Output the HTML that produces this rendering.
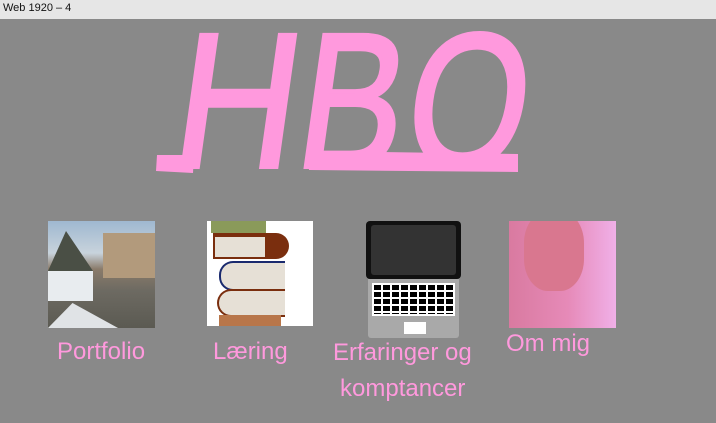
<!DOCTYPE html>
<html><head><meta charset="utf-8"><style>
body{margin:0;width:716px;height:423px;overflow:hidden;background:#898989;font-family:"Liberation Sans",sans-serif;position:relative}
.top{position:absolute;left:0;top:0;width:716px;height:19px;background:#e6e6e6;font-size:11px;line-height:17px;color:#111;padding-left:3px;box-sizing:border-box}
.lbl{position:absolute;color:#ff99dd;font-size:24px;white-space:nowrap}
.im{position:absolute;overflow:hidden}
</style></head><body>
<div class="top">Web 1920 – 4</div>
<svg width="716" height="423" style="position:absolute;left:0;top:0">
<g fill="#ff99dd" stroke="#ff99dd" stroke-width="4" font-family="Liberation Sans" font-size="192">
<text x="168" y="167" transform="skewX(-8) translate(24,0)" textLength="122" lengthAdjust="spacingAndGlyphs">H</text>
<text x="292" y="167" transform="skewX(-8) translate(24,0)" textLength="104" lengthAdjust="spacingAndGlyphs">B</text>
<text x="400" y="167" transform="skewX(-8) translate(24,0)" textLength="120" lengthAdjust="spacingAndGlyphs">O</text>
</g>
<g fill="#ff99dd">
<polygon points="157,155 194,155 193,173 156,171"/>
<polygon points="307,151 518,154 518,172 309,170"/>
</g>
</svg>
<div class="im" style="left:48px;top:221px;width:107px;height:107px;background:linear-gradient(#9fb8d0 0,#c8d3dc 30%,#8a7b6a 45%,#6d6a62 65%,#5b5a52 100%)">
<div style="position:absolute;left:0;top:10px;width:45px;height:40px;background:#4a4f45;clip-path:polygon(0 100%,40% 0,100% 100%)"></div>
<div style="position:absolute;left:55px;top:12px;width:52px;height:45px;background:#b29a7c"></div>
<div style="position:absolute;left:0;top:50px;width:45px;height:30px;background:#e8ecef"></div>
<div style="position:absolute;left:0;top:82px;width:70px;height:25px;background:#e0e3e6;clip-path:polygon(0 100%,35% 0,100% 100%)"></div>
</div>
<div class="im" style="left:207px;top:221px;width:106px;height:105px;background:#fff">
<div style="position:absolute;left:4px;top:0;width:55px;height:12px;background:#8a9a5a"></div>
<div style="position:absolute;left:6px;top:12px;width:76px;height:26px;background:#7a2e0e;border-radius:0 14px 14px 0"></div>
<div style="position:absolute;left:8px;top:16px;width:50px;height:20px;background:#e6e0d6"></div>
<div style="position:absolute;left:12px;top:40px;width:64px;height:26px;border:2px solid #1a2a6e;border-right:none;border-radius:14px 0 0 14px;background:#e6e0d6"></div>
<div style="position:absolute;left:10px;top:68px;width:66px;height:24px;border:2px solid #7a2e0e;border-right:none;border-radius:14px 0 0 14px;background:#e6e0d6"></div>
<div style="position:absolute;left:12px;top:94px;width:62px;height:12px;background:#b8764a"></div>
</div>
<div class="im" style="left:366px;top:221px;width:95px;height:117px">
<div style="position:absolute;left:0;top:0;width:95px;height:58px;background:#111;border-radius:4px"></div>
<div style="position:absolute;left:5px;top:4px;width:85px;height:50px;background:#333;border-radius:3px"></div>
<div style="position:absolute;left:2px;top:58px;width:91px;height:59px;background:#a9a9a9;border-radius:0 0 3px 3px"></div>
<div style="position:absolute;left:6px;top:62px;width:83px;height:33px;background:#fff"></div>
<div style="position:absolute;left:8px;top:64px;width:79px;height:29px;background:repeating-linear-gradient(90deg,transparent 0 7px,#fff 7px 9px),repeating-linear-gradient(#000 0 5px,#fff 5px 7px)"></div>
<div style="position:absolute;left:38px;top:101px;width:22px;height:12px;background:#fff"></div>
</div>
<div class="im" style="left:509px;top:221px;width:107px;height:107px;background:linear-gradient(90deg,#d97aa0 0,#e68ab8 55%,#f0b0e8 100%)">
<div style="position:absolute;left:15px;top:-10px;width:60px;height:80px;background:#d9778f;border-radius:40%"></div>
</div>
<div class="lbl" style="left:57px;top:338px">Portfolio</div>
<div class="lbl" style="left:213px;top:338px">Læring</div>
<div class="lbl" style="left:333px;top:339px">Erfaringer og</div>
<div class="lbl" style="left:340px;top:375px">komptancer</div>
<div class="lbl" style="left:506px;top:330px">Om mig</div>
</body></html>
